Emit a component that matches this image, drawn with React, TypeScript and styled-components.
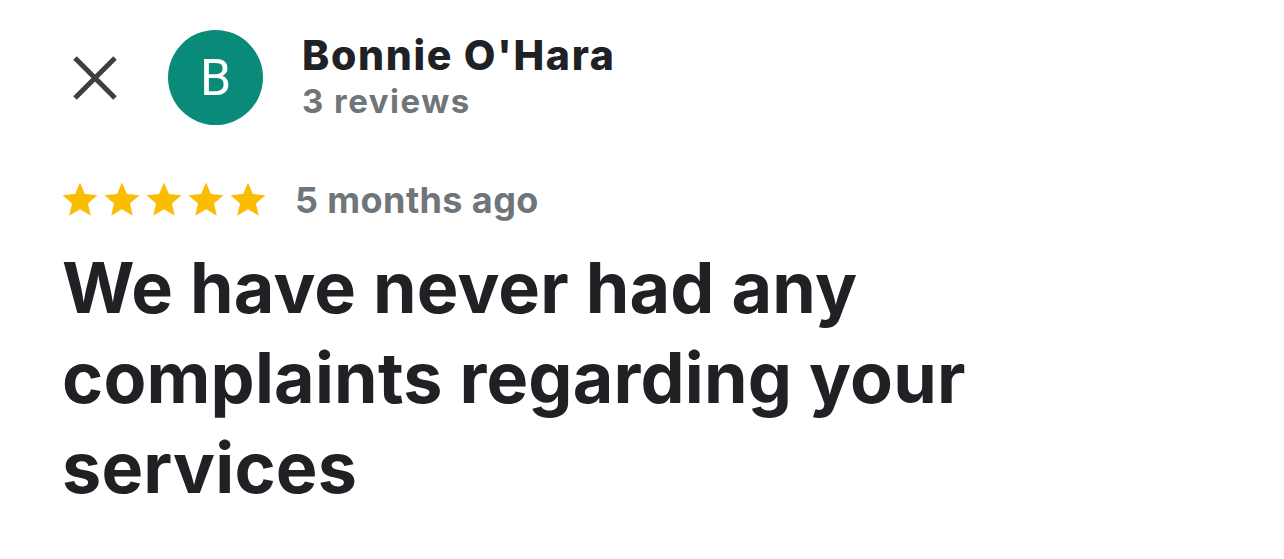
import React from 'react';
import styled, { createGlobalStyle } from 'styled-components';

const GlobalStyle = createGlobalStyle`
  html, body {
    margin: 0;
    padding: 0;
    background: #ffffff;
  }
  body {
    font-family: Inter, "Noto Sans", "Liberation Sans", sans-serif;
    color: #202124;
  }
`;

const Card = styled.section`
  width: 1284px;
  height: 559px;
  box-sizing: border-box;
  padding: 30px 0 0 62px;
  background: #ffffff;
  overflow: hidden;
`;

const Header = styled.header`
  display: flex;
  align-items: center;
  height: 95px;
`;

const CloseButton = styled.button`
  width: 42px;
  height: 42px;
  margin: 0 52px 0 12px;
  padding: 0;
  border: none;
  background: transparent;
  display: flex;
  align-items: center;
  justify-content: center;
  cursor: pointer;

  svg {
    overflow: visible;
  }
`;

const Avatar = styled.div`
  width: 95px;
  height: 95px;
  border-radius: 50%;
  background-color: #0a8a78;
  color: #ffffff;
  display: flex;
  align-items: center;
  justify-content: center;
  font-family: Roboto, "Liberation Sans", sans-serif;
  font-size: 50px;
  font-weight: 400;
  flex-shrink: 0;
`;

const Author = styled.div`
  display: flex;
  flex-direction: column;
  margin-left: 39px;
  margin-top: -2px;
`;

const Name = styled.span`
  font-size: 41px;
  font-weight: 800;
  letter-spacing: 1.7px;
  line-height: 48px;
  color: #202124;
`;

const Meta = styled.span<{ $spacing?: number }>`
  font-size: 33px;
  font-weight: 700;
  letter-spacing: ${p => p.$spacing ?? 1.5}px;
  line-height: 44px;
  color: #70757a;
`;

const RatingRow = styled.div`
  display: flex;
  align-items: center;
  margin: 54px 0 0 -3px;
  height: 42px;
`;

const Stars = styled.div`
  display: flex;
  margin-right: 26px;
`;

const Time = styled(Meta)`
  font-size: 36px;
`;

const Body = styled.p`
  margin: 22px 0 0;
  font-size: 70px;
  font-weight: 700;
  line-height: 90px;
  letter-spacing: 0.2px;
  color: #202124;
  max-width: 1000px;
`;

function Star() {
  return (
    <svg width="42" height="42" viewBox="0 0 24 24" aria-hidden="true">
      <path
        fill="#fbbc04"
        d="M12 17.27L18.18 21l-1.64-7.03L22 9.24l-7.19-.61L12 2 9.19 8.63 2 9.24l5.46 4.73L5.82 21z"
      />
    </svg>
  );
}

function CloseIcon() {
  return (
    <svg width="42" height="42" viewBox="0 0 42 42" aria-hidden="true">
      <path d="M1 1L41 41M41 1L1 41" stroke="#3c4043" strokeWidth="5" />
    </svg>
  );
}

export default function App() {
  const rating = 5;

  return (
    <>
      <GlobalStyle />
      <Card>
        <Header>
          <CloseButton aria-label="Close">
            <CloseIcon />
          </CloseButton>
          <Avatar>B</Avatar>
          <Author>
            <Name>Bonnie O'Hara</Name>
            <Meta>3 reviews</Meta>
          </Author>
        </Header>
        <RatingRow>
          <Stars>
            {Array.from({ length: rating }).map((_, i) => (
              <Star key={i} />
            ))}
          </Stars>
          <Time $spacing={0.4}>5 months ago</Time>
        </RatingRow>
        <Body>We have never had any complaints regarding your services</Body>
      </Card>
    </>
  );
}
